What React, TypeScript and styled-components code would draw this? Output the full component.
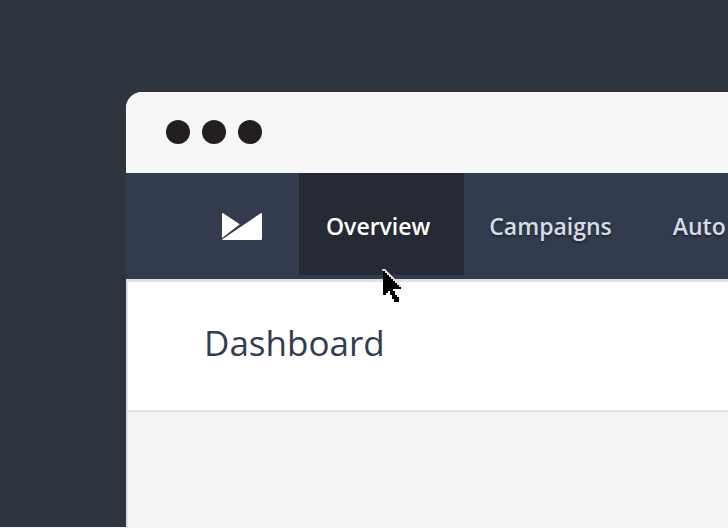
import React from "react";
import styled, { createGlobalStyle } from "styled-components";

const GlobalStyle = createGlobalStyle`
  *, *::before, *::after { box-sizing: border-box; }
  body {
    margin: 0;
    background: #2f353f;
    font-family: "Open Sans", "Noto Sans", sans-serif;
    overflow: hidden;
  }
`;

const Stage = styled.div`
  display: flex;
  min-height: 100vh;
  padding: 92px 0 0 126px;
  border-bottom: 1px solid #f4f5f6;
`;

const BrowserWindow = styled.div`
  flex: 1;
  min-width: 0;
  display: flex;
  flex-direction: column;
  overflow: hidden;
  border-top-left-radius: 16px;
  background: #f3f4f6;
`;

const TitleBar = styled.div`
  display: flex;
  gap: 12px;
  padding: 28px 40px 29px;
  background: #f7f7f7;
`;

const WindowDot = styled.span`
  width: 24px;
  height: 24px;
  border-radius: 50%;
  background: #231f20;
`;

const NavBar = styled.header`
  display: flex;
  height: 106px;
  padding-left: 96px;
  background: #323c4e;
`;

const HomeLink = styled.a`
  display: flex;
  align-items: center;
  flex: none;
  margin-right: 37px;
`;

const Nav = styled.nav`
  display: flex;
  align-items: flex-start;
`;

const NavLink = styled.a<{ $active?: boolean }>`
  position: relative;
  flex: none;
  height: 102px;
  padding: 0 ${(p) => (p.$active ? 34 : 36)}px 0 ${(p) => (p.$active ? 27 : 25)}px;
  background: ${(p) => (p.$active ? "#252a35" : "transparent")};
  color: ${(p) => (p.$active ? "#ffffff" : "#d6dce3")};
  font-size: 23px;
  font-weight: 600;
  line-height: 106px;
  text-decoration: none;
  text-shadow: ${(p) => (p.$active ? "none" : "0 2px 2px rgba(20, 25, 35, 0.6)")};
  white-space: nowrap;
`;

const Pointer = styled.svg`
  position: absolute;
  top: 96px;
  left: 83px;
  z-index: 1;
`;

const Page = styled.main`
  flex: 1;
  border-top: 3px solid #e1e1e2;
  border-left: 2px solid #dedfe0;
`;

const PageHeader = styled.div`
  padding: 37px 76px 43px;
  border-bottom: 2px solid #e1e1e2;
  background: #ffffff;
`;

const PageTitle = styled.h1`
  margin: 0;
  color: #323c50;
  font-size: 35px;
  font-weight: 400;
  line-height: 48px;
`;

const MailLogo = () => (
  <svg width="40" height="28" viewBox="0 0 40 28" fill="#fff" aria-hidden="true">
    <path d="M0 2.2C0 1.2 .8 .8 1.6 1.4L17.8 12.3 .7 25.6 0 26.2Z" />
    <path d="M38.4 1.4C39.2 .8 40 1.2 40 2.2V26.7C40 27.6 39.4 28.2 38.5 28.2H1.2C.4 28.2 0 27.6 .3 27.2Z" />
  </svg>
);

const App = () => (
  <>
    <GlobalStyle />
    <Stage>
      <BrowserWindow>
        <TitleBar>
          <WindowDot />
          <WindowDot />
          <WindowDot />
        </TitleBar>
        <NavBar>
          <HomeLink href="#home" aria-label="Home">
            <MailLogo />
          </HomeLink>
          <Nav>
            <NavLink href="#overview" $active aria-current="page">
              Overview
              <Pointer width="20" height="35" viewBox="0 0 20 35" aria-hidden="true">
                <path
                  d="M0 0H3L19 16V18H17L1 3Z"
                  fill="#e4e4e4"
                />
                <path
                  d="M1 2H3V4H5V6H7V8H9V10H11V12H13V14H15V16H17V18H19V20H11V22H13V26H15V28H17V33H12V30H10V26H8V22H6V24H4V26H1Z"
                  fill="#000"
                />
              </Pointer>
            </NavLink>
            <NavLink href="#campaigns">Campaigns</NavLink>
            <NavLink href="#auto">Auto</NavLink>
          </Nav>
        </NavBar>
        <Page>
          <PageHeader>
            <PageTitle>Dashboard</PageTitle>
          </PageHeader>
        </Page>
      </BrowserWindow>
    </Stage>
  </>
);

export default App;
